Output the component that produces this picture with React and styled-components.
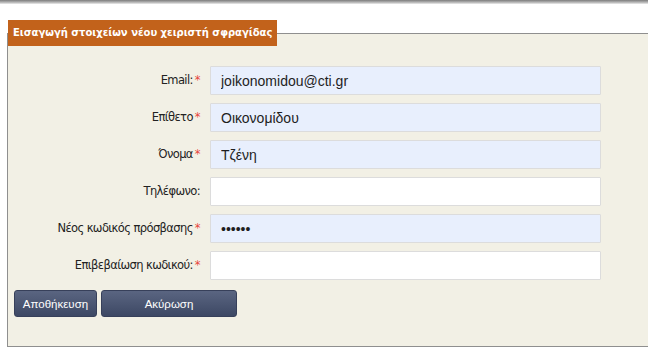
import React, { useEffect, useRef } from "react";
import styled, { createGlobalStyle } from "styled-components";

const GlobalStyle = createGlobalStyle`
    html, body {
        margin: 0;
        padding: 0;
        background: #fff;
        overflow: hidden;
    }
    body {
        font-family: "DejaVu Sans", Verdana, sans-serif;
    }
`;

const fields = [
    { id: "email", label: "Email:", value: "joikonomidou@cti.gr", required: true, filled: true },
    { id: "surname", label: "Επίθετο", value: "Οικονομίδου", required: true, filled: true },
    { id: "name", label: "Όνομα", value: "Τζένη", required: true, filled: true, focus: true },
    { id: "phone", label: "Τηλέφωνο:", value: "" },
    { id: "password", label: "Νέος κωδικός πρόσβασης", value: "123456", required: true, filled: true, type: "password" },
    { id: "confirm", label: "Επιβεβαίωση κωδικού:", value: "", required: true },
];

const Field = ({ field }) => {
    const ref = useRef(null);

    useEffect(() => {
        if (field.focus && ref.current) {
            const len = field.value.length;
            ref.current.focus();
            ref.current.setSelectionRange(len, len);
        }
    }, [field]);

    return (
        <>
            <Label htmlFor={field.id}>
                {field.label}
                {field.required && <Star>*</Star>}
            </Label>
            <Input
                ref={ref}
                id={field.id}
                type={field.type || "text"}
                defaultValue={field.value}
                $filled={field.filled}
            />
        </>
    );
};

const App = () => {
    return (
        <Page>
            <GlobalStyle />
            <TopBar />
            <Box>
                <Legend>Εισαγωγή στοιχείων νέου χειριστή σφραγίδας</Legend>
                <Form>
                    {fields.map((f) => (
                        <Field key={f.id} field={f} />
                    ))}
                </Form>
                <Buttons>
                    <Button $width="83px">Αποθήκευση</Button>
                    <Button $width="136px">Ακύρωση</Button>
                </Buttons>
            </Box>
        </Page>
    );
};

const Page = styled.div`
    width: 648px;
    height: 358px;
    overflow: hidden;
`;

const TopBar = styled.div`
    height: 4px;
    background: linear-gradient(#7c7c7c, #b8b8b8 60%, #ececec);
`;

const Box = styled.fieldset`
    margin: 16px 0 0 7px;
    padding: 0 0 29px 0;
    width: 700px;
    min-width: 0;
    border: 1px solid #8f8f8f;
    border-right: none;
    background: #f2f0e5;
`;

const Legend = styled.legend`
    margin: 0;
    padding: 6px 5px 6px 5px;
    background: #c2621b;
    color: #fff;
    font-family: "DejaVu Sans", Verdana, sans-serif;
    font-size: 10px;
    font-weight: 700;
    line-height: 14px;
`;

const Form = styled.div`
    display: grid;
    grid-template-columns: 192px 391px;
    grid-auto-rows: 29px;
    column-gap: 10px;
    row-gap: 8px;
    padding-top: 20px;
`;

const Label = styled.label`
    align-self: center;
    justify-self: end;
    font-family: "DejaVu Sans", Verdana, sans-serif;
    font-size: 11.5px;
    letter-spacing: -0.6px;
    color: #222;
    margin-bottom: 2px;
`;

const Star = styled.span`
    color: #e8463c;
    margin-left: 2px;
`;

const Input = styled.input`
    box-sizing: border-box;
    width: 391px;
    height: 29px;
    margin: 0;
    padding: 0 10px;
    border: 1px solid #dcdcdc;
    border-radius: 1px;
    background: ${(p) => (p.$filled ? "#e8effd" : "#fff")};
    font-family: "Liberation Sans", Arial, sans-serif;
    font-size: 14px;
    color: #1e1e1e;
    outline: none;
    caret-color: #000;
`;

const Buttons = styled.div`
    display: flex;
    gap: 4px;
    padding: 10px 0 0 6px;
`;

const Button = styled.button`
    width: ${(p) => p.$width};
    height: 27px;
    padding: 0;
    border: 1px solid #37405a;
    border-radius: 3px;
    background: linear-gradient(#5a6581, #3d4864);
    color: #fff;
    font-family: "Liberation Sans", Arial, sans-serif;
    font-size: 11.5px;
    cursor: pointer;
`;

export default App;
